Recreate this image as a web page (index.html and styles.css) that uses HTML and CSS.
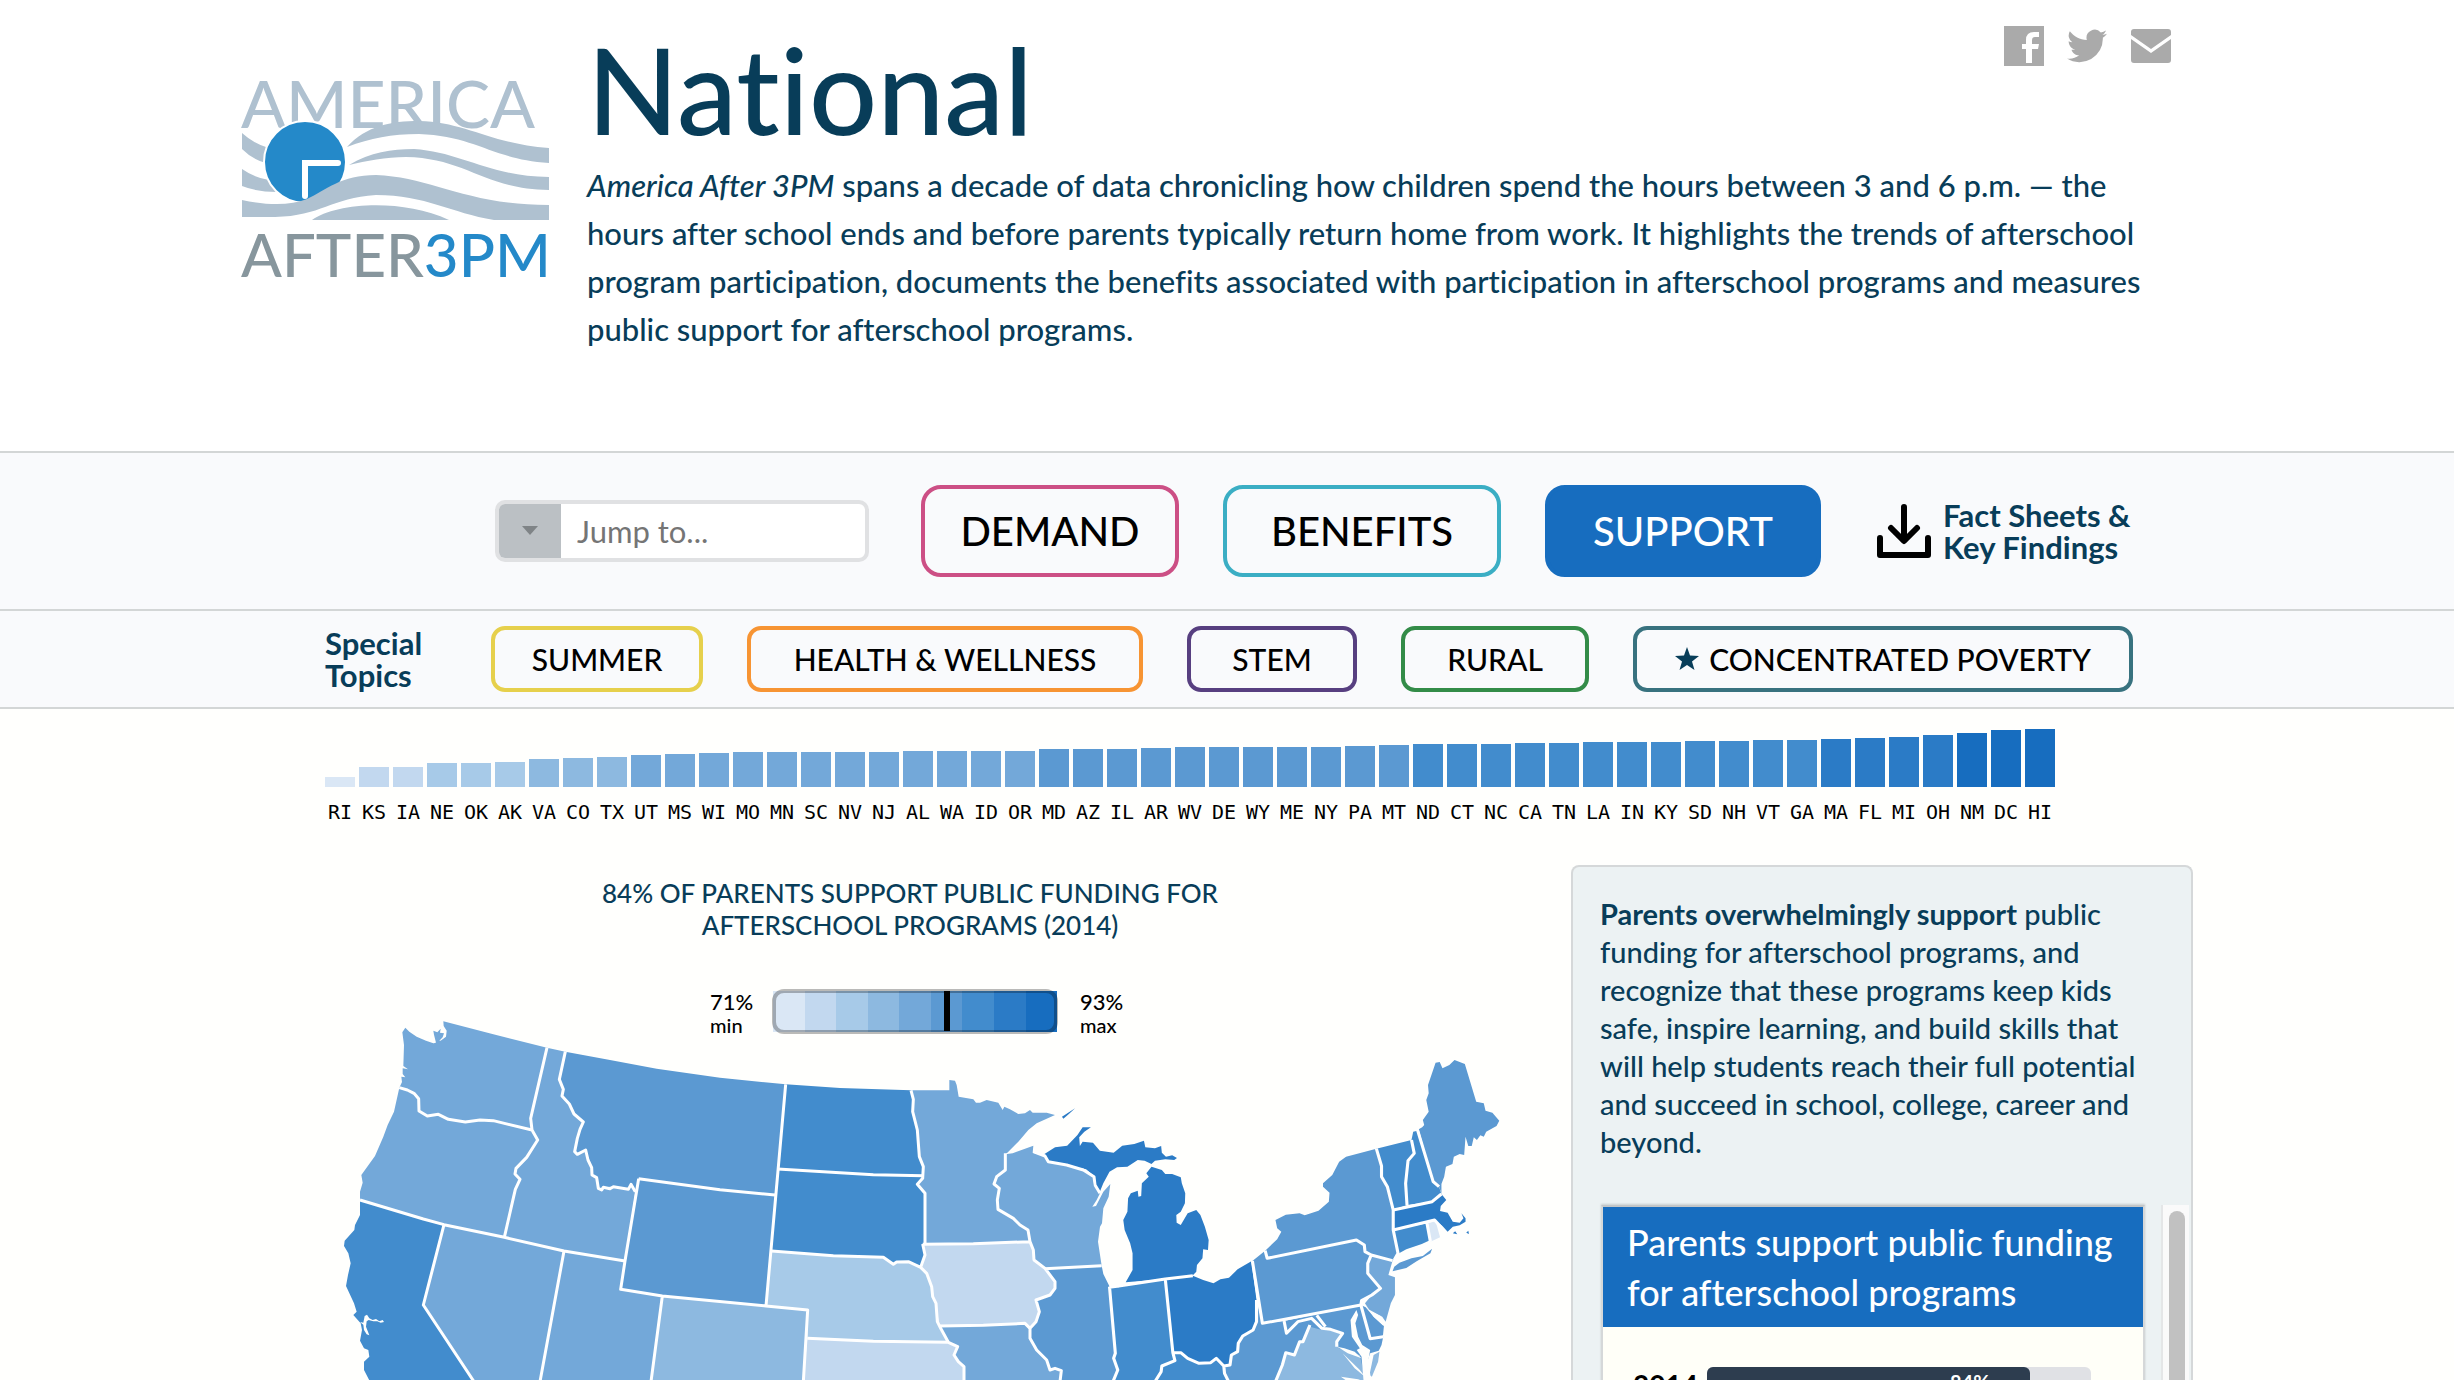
FILE: index.html
```html
<!DOCTYPE html>
<html lang="en">
<head>
<meta charset="utf-8">
<title>America After 3PM - National</title>
<link rel="stylesheet" href="styles.css">
</head>
<body>
<header class="header">
  <div class="header-inner">
    <a class="logo" href="#" aria-label="America After 3PM">
      <svg viewBox="0 0 310 230" width="310" height="230">
        <text class="logo-top" x="0" y="68">AMERICA</text>
        <g fill="#afc1d0">
          <path d="M1 73Q12 83 25 87V103Q12 100 1 89Z"/>
          <path d="M1 109Q14 118 28 120L36 132Q16 132 1 126Z"/>
          <path d="M106 87C125 66 150 61 178 61C225 62 250 84 308 88V103C250 99 235 76 178 74C150 74 130 78 106 87Z"/>
          <path d="M108 105C130 92 150 89 173 89C220 92 250 117 308 117V130C245 130 225 98 165 97C145 97 125 101 108 105Z"/>
        </g>
        <circle cx="64" cy="102" r="41" fill="#2489c9" stroke="#fff" stroke-width="2"/>
        <path d="M97 103H64V136" fill="none" stroke="#fff" stroke-width="6" stroke-linecap="round"/>
        <g fill="#afc1d0">
          <path d="M1 140C30 146 50 145 66 139C85 130 100 115 135 115C190 117 225 145 308 145V160H253C210 153 185 135 135 135C90 138 80 156 34 157H1Z"/>
          <path d="M71 160C95 143 160 138 208 160Z"/>
        </g>
        <text class="logo-bottom" x="0" y="217">AFTER<tspan class="logo-blue">3PM</tspan></text>
      </svg>
    </a>
    <div class="intro">
      <div class="title-row">
        <h1>National</h1>
        <nav class="social" aria-label="Share">
          <a href="#" aria-label="Facebook"><svg viewBox="0 0 40 40" width="40" height="40"><path fill="#aaa" d="M0 0H40V40H28V23H34L35 18H28V14Q28 11 31 11H35V6H30Q22 6 22 14V18H18V23H22V37H28V40H0Z"/></svg></a>
          <a href="#" aria-label="Twitter"><svg viewBox="0 0 24 24" width="40" height="40"><path fill="#aaa" d="M24 4.6c-.9.4-1.8.7-2.8.8 1-.6 1.800-1.600 2.200-2.700-1 .6-2 1-3.100 1.200a4.900 4.900 0 0 0-8.400 4.500C7.700 8.200 4.100 6.300 1.700 3.200a4.900 4.900 0 0 0 1.500 6.600c-.8 0-1.600-.2-2.200-.6v.1c0 2.400 1.700 4.400 3.900 4.800-.7.200-1.500.2-2.200.1.600 2 2.400 3.400 4.600 3.400A9.900 9.900 0 0 1 0 19.500a14 14 0 0 0 21.500-12.400c1-.7 1.800-1.600 2.500-2.500z"/></svg></a>
          <a href="#" aria-label="Email"><svg viewBox="0 0 42 40" width="42" height="40"><path fill="#aaa" d="M4 3H38Q41 3 41 6V9L21 23L1 9V6Q1 3 4 3ZM1 13L21 27L41 13V34Q41 37 38 37H4Q1 37 1 34Z"/></svg></a>
        </nav>
      </div>
      <p><em>America After 3PM</em> spans a decade of data chronicling how children spend the hours between 3 and 6 p.m. — the hours after school ends and before parents typically return home from work. It highlights the trends of afterschool program participation, documents the benefits associated with participation in afterschool programs and measures public support for afterschool programs.</p>
    </div>
  </div>
</header>

<nav class="bar bar-main" aria-label="Sections">
  <div class="bar-inner">
    <div class="jump">
      <button type="button" aria-label="Open list"><svg viewBox="0 0 16 10" width="16" height="10"><path fill="#7f8487" d="M0 0H16L8 9Z"/></svg></button>
      <input type="text" placeholder="Jump to..." aria-label="Jump to">
    </div>
    <button type="button" class="tab demand">DEMAND</button>
    <button type="button" class="tab benefits">BENEFITS</button>
    <button type="button" class="tab support">SUPPORT</button>
    <a class="facts" href="#">
      <svg viewBox="0 0 54 54" width="54" height="54"><path d="M27 3V34M14 24L27 37L40 24M3 34V51H51V34" fill="none" stroke="#000" stroke-width="6" stroke-linecap="round" stroke-linejoin="round"/></svg>
      <span>Fact Sheets &amp;<br>Key Findings</span>
    </a>
  </div>
</nav>
<nav class="bar bar-topics" aria-label="Special topics">
  <div class="bar-inner">
    <span class="topics-label">Special<br>Topics</span>
    <button type="button" class="topic summer">SUMMER</button>
    <button type="button" class="topic health">HEALTH &amp; WELLNESS</button>
    <button type="button" class="topic stem">STEM</button>
    <button type="button" class="topic rural">RURAL</button>
    <button type="button" class="topic poverty"><svg viewBox="0 0 24 24" width="24" height="24"><path fill="#083d59" d="M12 0L15 8.500L24 9L17 14.500L19.500 23L12 18L4.500 23L7 14.500L0 9L9 8.500Z"/></svg>CONCENTRATED POVERTY</button>
  </div>
</nav>

<main class="main">
  <div class="main-inner">
    <ul class="chart" id="chart"></ul>
    <div class="columns">
      <section class="map-col">
        <h2>84% OF PARENTS SUPPORT PUBLIC FUNDING FOR<br>AFTERSCHOOL PROGRAMS (2014)</h2>
        <div class="legend">
          <div class="legend-text"><b>71%</b><span>min</span></div>
          <div class="scale">
            <i class="c1"></i><i class="c2"></i><i class="c3"></i><i class="c4"></i><i class="c5"></i><i class="c6"></i><i class="c7"></i><i class="c8"></i><i class="c9"></i>
            <span class="marker"></span>
          </div>
          <div class="legend-text"><b>93%</b><span>max</span></div>
        </div>
        <svg class="map" viewBox="0 0 3600 1140" role="img" aria-label="Support by state">
          <path class="c5" d="M247 97L256 83L268 95L290 110L318 122L340 130L348 128L342 104L340 92L352 97L362 86L360 98L372 100L368 112L358 122L372 124L376 145L366 158L364 180L358 205L344 200L335 214L326 206L318 214L326 196L344 192L350 176L328 173L346 162L356 150L352 138L342 130L362 122L378 110L380 92L371 78L370 64L520 103L681 143L632 355L636 390L520 362L480 360L436 366L385 358L355 343L322 348L297 333L296 296L282 280L262 270L238 263L246 246L244 230L256 232L248 222L248 205L264 208L250 198L252 135Z"/>
          <path class="c5" d="M238 263L262 270L282 280L296 296L297 333L322 348L355 343L385 358L436 366L480 360L520 362L636 390L653 420L620 472L588 505L585 522L600 538L586 568L553 712L372 674L310 657L120 600L120 575L128 548L124 525L165 468L190 410L203 375L222 335L232 290Z"/>
          <path class="c5" d="M681 143L736 155L718 238L730 268L726 288L748 312L762 342L790 366L780 388L772 415L764 455L772 463L797 450L804 480L815 503L816 525L830 533L835 565L870 560L925 568L933 553L946 575L915 783L732 753L553 712L586 568L600 538L585 522L588 505L620 472L653 420L636 390L632 355Z"/>
          <path class="c6" d="M736 155L870 180L1010 206L1200 233L1397 253L1365 585L1200 569L956 536L946 575L933 553L925 568L870 560L835 565L830 533L816 525L815 503L804 480L797 450L772 463L764 455L772 415L780 388L790 366L762 342L748 312L726 288L730 268L718 238Z"/>
          <path class="c6" d="M956 536L1200 569L1365 585L1338 918L1140 902L1027 888L902 868Z"/>
          <path class="c7" d="M120 600L372 674L310 915L462 1145H150L132 1110V1085L148 1070L145 1050L132 1045L120 1022L126 990L122 970L100 945L110 935L102 910L78 858L84 825L92 790L85 760L72 738L74 722L103 690L105 675L120 645Z"/>
          <path class="c5" d="M372 674L732 753L660 1145H462L310 915Z"/>
          <path class="c5" d="M732 753L915 783L902 868L1027 888L993 1145H660Z"/>
          <path class="c4" d="M1027 888L1338 918L1463 930L1450 1145H993Z"/>
          <path class="c7" d="M1397 253L1560 264L1773 271L1780 298L1778 335L1792 390L1798 470L1810 500V527L1660 524L1373 507Z"/>
          <path class="c7" d="M1373 507L1660 524L1810 527L1806 540L1792 553L1815 580V730L1808 732L1815 765L1802 802L1765 785L1730 788L1720 793L1690 772L1540 767L1355 753Z"/>
          <path class="c3" d="M1355 753L1540 767L1690 772L1720 793L1730 788L1765 785L1802 802L1820 820L1835 860L1838 890L1848 910L1852 965L1862 985L1885 1027L1660 1024L1462 1015L1463 930L1338 918Z"/>
          <path class="c2" d="M1462 1015L1660 1024L1885 1027L1905 1035L1913 1045L1902 1065L1915 1085L1932 1100V1145H1450Z"/>
          <path class="c5" d="M1773 271H1888V240L1905 242L1910 255L1916 290L1960 298L1968 308L1980 308L2000 300L2035 308L2048 330L2053 320L2070 328L2095 342L2115 340L2130 330L2138 338L2180 338L2205 345L2150 370L2125 390L2095 425L2062 458L2056 463V510L2030 530L2022 552L2038 565L2032 600L2034 628L2080 655L2100 675L2124 690L2130 725L1960 731L1815 733V580L1792 553L1806 540L1810 500L1798 470L1792 390L1778 335L1780 298Z"/>
          <path class="c2" d="M1815 733L1960 731L2130 725L2140 750L2142 780L2175 805L2205 845V865L2190 885L2148 900L2158 935L2148 965L2130 985L2115 970L1990 976L1858 978L1848 910L1838 890L1835 860L1820 820L1802 802L1815 765L1808 732Z"/>
          <path class="c5" d="M1858 978L1990 976L2115 970L2130 990V1015L2150 1050L2180 1080L2190 1110L2205 1105L2224 1112L2220 1145H1932V1100L1915 1085L1902 1065L1913 1045L1885 1027L1862 985Z"/>
          <path class="c5" d="M2056 463L2078 460L2140 437L2138 458L2175 468L2185 485L2240 495L2290 510L2322 530L2325 555L2340 580L2330 600L2317 620L2328 618L2350 575L2371 552L2366 590L2350 625L2346 670L2340 680L2334 725L2345 797L2174 806L2142 780L2140 750L2130 725L2124 690L2080 655L2034 628L2032 600L2038 565L2022 552L2030 530L2056 510Z"/>
          <path class="c6" d="M2174 806L2345 797L2350 822L2369 860L2386 1060L2381 1080L2393 1110L2379 1145H2220L2224 1112L2205 1105L2190 1110L2180 1080L2150 1050L2130 1015V990L2148 965L2158 935L2148 900L2190 885L2205 865V845Z"/>
          <path class="water" d="M120 966L130 968L134 948L141 944L148 955L158 960L168 957L178 964L188 960L192 966L182 968L172 964L160 964L146 960L140 964L138 980L148 1006L140 1003L132 990L130 974Z"/>
          <g transform="matrix(1.033 0 0 1 2040 120)">
            <path class="c7" d="M318 740L345 742L365 733L480 717L502 938L508 962L470 978L468 995L450 1025H328L342 990L330 955L335 940Z"/>
            <path class="c8" d="M480 719L560 707L590 720L620 730L640 718L665 713L690 688L730 664L745 780V845L735 870L705 888L692 910L690 935L672 945L668 975L650 978L628 955L612 968L578 970L545 955L525 938L503 938Z"/>
            <path class="c7" d="M450 1025L468 995L470 978L508 962L503 938L525 938L545 955L578 970L612 968L628 955L650 978L652 1000L664 1025Z"/>
            <path class="c8" d="M365 727L385 690V640L378 610L362 570L358 540L370 515L372 475L380 460L400 452L402 470L410 468L412 430L432 410L425 400L440 380L470 390L480 402L500 402L525 412L528 430L538 460L537 490L525 515L512 525L513 548L525 555L545 520L570 510L582 525L595 560L606 600L604 630L590 628L588 655L572 675L570 695L560 706L480 717Z"/>
            <path class="c8" d="M128 343L160 322L195 317L225 285L240 262L264 262L245 275L230 292L232 318L240 305L270 308L290 332L330 338L355 317L390 312L418 302L422 322L450 325L468 318L470 338L482 350L500 346L514 354L506 360L480 358L450 362L440 372L420 362L400 360L370 380L340 382L318 395L300 430L290 455L270 435V405L250 388L200 378L140 365ZM180 230L218 205L200 222L184 236Z"/>
            <path class="c6" d="M733 663L770 632L776 655L1035 600L1058 615L1060 635L1078 645L1068 670V700L1105 745L1080 765L1050 782L1048 795L930 822L762 850Z"/>
            <path class="c6" d="M770 632L805 598L817 575L805 565L800 540L830 524L870 520L885 526L925 512L955 485L957 458L938 440V430L965 405L985 365L1005 350L1093 326L1108 378V410L1125 440L1142 510V570L1156 640L1140 662L1078 645L1060 635L1058 615L1035 600L776 655Z"/>
            <path class="c6" d="M1140 694L1145 680L1160 668L1195 655L1228 648L1255 626L1250 640L1210 664L1180 684Z"/>
            <path class="c7" d="M1093 326L1195 300L1203 340L1185 362L1178 430L1182 495L1142 510L1125 440L1108 410V378Z"/>
            <path class="c7" d="M1195 300L1200 275L1212 272L1258 425L1275 440L1282 462L1255 485L1182 495L1178 430L1185 362L1203 340Z"/>
            <path class="c6" d="M1216 268L1226 262L1232 255L1228 240L1245 215L1238 180L1245 160L1243 135L1265 68L1277 66L1285 85L1305 75L1320 60L1350 72L1383 185L1405 190L1410 212L1430 218L1450 242L1442 258L1412 275L1405 290L1395 286L1385 300L1376 292L1370 318L1360 318L1352 290L1348 345L1335 342L1318 350L1314 372L1295 380L1290 410L1282 432L1282 460L1275 440L1258 425Z"/>
            <path class="c8" d="M1142 510L1255 485L1282 462L1296 480L1280 498L1278 513L1300 518L1315 545L1335 548L1346 535L1340 520L1352 535V545L1335 556L1315 560L1300 575L1285 558L1262 540L1142 570ZM1315 580L1322 574L1328 583ZM1354 578L1360 572L1362 582Z"/>
            <path class="c7" d="M1142 570L1240 550L1250 600L1225 612L1180 628L1155 642Z"/>
            <path class="c1" d="M1240 550L1265 543L1278 592L1250 605Z"/>
            <path class="c5" d="M1078 645L1140 662L1128 705L1147 712V765L1135 790L1120 845L1110 830L1070 808L1060 790L1080 765L1105 745L1068 700V670Z"/>
            <path class="c6" d="M1048 795L1062 802L1085 830L1115 858L1112 888L1075 896Z"/>
            <path class="c6" d="M745 780L762 850L825 843L1048 795L1075 896L1113 890L1108 915L1100 932L1075 940L1055 1000L1000 960L895 865L880 905L870 905L855 945L830 938L820 975L800 1025H664L652 1000L650 978L668 975L672 945L690 935L692 910L705 888L735 870L745 845Z"/>
            <path class="c4" d="M800 1025L820 975L830 938L855 945L870 905L880 905L900 860L935 870L960 865L995 880L978 905L985 925L1010 935L1045 945L1062 1025Z"/>
            <path class="c4" d="M1085 945L1102 935L1098 965L1080 1010L1073 1005Z"/>
            <path class="water" d="M1035 810L1040 825L1032 850L1040 890L1052 915L1075 930L1070 960L1078 1025H1056L1050 950L1036 930L1045 925L1022 890L1018 840ZM980 920L1000 925L1030 935L1050 955L1010 940ZM995 940L1045 990L1060 1010L1030 985ZM990 1010L1040 1018L1060 1025H1010Z"/>
            <path class="water" d="M1060 790L1072 812L1105 828L1114 858L1085 830Z"/>
            <g class="lines">
              <path d="M318 740L335 940L330 955L342 990L328 1025M318 742L345 738L480 717L560 707M480 717L502 938L525 938L545 955L578 970L612 968L628 955L650 978L668 975L672 945L690 935L692 910L705 888L735 870L745 845V780M502 938L508 962L470 978L468 995L450 1025M650 978L652 1000L664 1025"/>
              <path d="M733 663L762 850L1048 795L1050 782L1080 765L1105 745L1068 700V670L1078 645L1060 635L1058 615L1035 600L776 655L770 632M1078 645L1140 662"/>
              <path d="M1093 326L1108 378V410L1125 440L1142 510V570L1156 640L1145 660M1195 300L1203 340L1185 362L1178 430L1182 495M1212 268L1258 425L1275 440M1142 510L1255 485L1282 462M1142 570L1262 540L1280 560M1240 550L1250 605M1145 665L1200 640L1250 612"/>
              <path d="M1048 795L1075 896L1113 890M825 843L832 880L865 845L905 835L935 865L960 868L995 880L978 905V920M920 826L945 860M800 1025L820 975L830 938L855 945L870 905L880 905L900 855"/>
            </g>
          </g>
          <g class="lines">
            <path d="M238 263L262 270L282 280L296 296L297 333L322 348L355 343L385 358L436 366L480 360L520 362L636 390M681 143L632 355L636 390L653 420L620 472L588 505L585 522L600 538L586 568L553 712M120 600L310 657L372 674L553 712L732 753L915 783"/>
            <path d="M736 155L718 238L730 268L726 288L748 312L762 342L790 366L780 388L772 415L764 455L772 463L797 450L804 480L815 503L816 525L830 533L835 565L845 570L850 562L870 566L880 560L925 568L933 553L946 575M372 674L310 915L462 1145M732 753L660 1145"/>
            <path d="M956 536L915 783L902 868L1027 888L1338 918L1463 930L1450 1145M956 536L1200 569L1365 585M1397 253L1338 918M1027 888L993 1145"/>
            <path d="M1773 271L1780 298L1778 335L1792 390L1798 470L1810 500L1808 535L1792 553L1815 580V730M1373 507L1660 524L1810 527M1355 753L1540 767L1690 772L1720 793L1730 786L1765 785L1802 802M1808 732L1815 765L1802 802L1820 820L1835 860L1838 890L1848 910L1852 965L1862 985L1885 1027L1913 1040L1902 1065L1915 1085L1932 1100V1145M1462 1015L1660 1024L1885 1027"/>
            <path d="M1808 733L1960 731L2130 725M2056 460V510L2030 530L2022 552L2038 565L2032 600L2034 628L2080 655L2100 675L2124 690L2130 725L2140 750L2142 780L2175 805L2205 845V865L2190 885L2148 900L2158 935L2148 965L2130 985M1858 978L1990 976L2115 970L2130 985V1015L2150 1050L2180 1080L2190 1110L2205 1105L2224 1112L2220 1145M2174 806L2345 797M2140 455L2175 468L2185 485L2240 495L2290 510L2322 530L2325 555L2340 580"/>
          </g>
        </svg>
      </section>
      <aside class="panel">
        <p><strong>Parents overwhelmingly support</strong> public funding for afterschool programs, and recognize that these programs keep kids safe, inspire learning, and build skills that will help students reach their full potential and succeed in school, college, career and beyond.</p>
        <div class="scroller">
          <article class="card">
            <h3>Parents support public funding for afterschool programs</h3>
            <div class="stat">
              <span class="year">2014</span>
              <div class="track"><div class="fill">84%</div></div>
            </div>
          </article>
          <div class="rail"><div class="thumb"></div></div>
        </div>
      </aside>
    </div>
  </div>
</main>
<script src="chart.js"></script>
</body>
</html>
```
FILE: chart.js
```js
// state code, bar height in px; groups share one shade of the scale
const groups = [
  [1, "RI 10"],
  [2, "KS 20,IA 20"],
  [3, "NE 24,OK 24,AK 25"],
  [4, "VA 28,CO 29,TX 30"],
  [5, "UT 32,MS 33,WI 34,MO 35,MN 35,SC 35,NV 35,NJ 35,AL 36,WA 36,ID 36,OR 36"],
  [6, "MD 38,AZ 38,IL 38,AR 39,WV 40,DE 40,WY 40,ME 40,NY 40,PA 41,MT 42"],
  [7, "ND 43,CT 43,NC 43,CA 44,TN 44,LA 45,IN 45,KY 45,SD 46,NH 46,VT 47,GA 47"],
  [8, "MA 48,FL 49,MI 50,OH 52"],
  [9, "NM 54,DC 57,HI 58"]
];
document.getElementById("chart").innerHTML = groups.map(([shade, list]) =>
  list.split(",").map(item => {
    const [code, height] = item.split(" ");
    return `<li><i class="c${shade}" style="height:${height}px"></i><span>${code}</span></li>`;
  }).join("")
).join("");
```
FILE: styles.css
```css
* { box-sizing: border-box; }
body {
  margin: 0;
  height: 100vh;
  overflow: hidden;
  display: flex;
  flex-direction: column;
  background: #fffffd;
  color: #083d59;
  font-family: Lato, "Trebuchet MS", sans-serif;
  font-weight: 500;
  font-variant-ligatures: none;
}
h1, h2, h3, p, ul { margin: 0; padding: 0; font-weight: 500; }
a { color: inherit; text-decoration: none; }
button, input { font-family: inherit; color: #000; }
svg { display: block; }

.c1 { background: #dae7f5; fill: #dae7f5; }
.c2 { background: #c2d8ef; fill: #c2d8ef; }
.c3 { background: #a7cae8; fill: #a7cae8; }
.c4 { background: #8db9e0; fill: #8db9e0; }
.c5 { background: #73a8d9; fill: #73a8d9; }
.c6 { background: #5b99d2; fill: #5b99d2; }
.c7 { background: #428ccd; fill: #428ccd; }
.c8 { background: #2b7bc6; fill: #2b7bc6; }
.c9 { background: #176dbf; fill: #176dbf; }

.header { background: #fff; padding-bottom: 98px; }
.header-inner {
  display: flex;
  gap: 36px;
  width: 100%;
  max-width: 1972px;
  margin: 0 auto;
}
.logo { flex: none; padding-top: 60px; }
.logo-top { font-size: 66px; fill: #afc1d0; }
.logo-bottom { font-size: 60px; fill: #87969d; }
.logo-blue { fill: #2489c9; }
.intro { flex: 1; padding-top: 26px; }
.title-row { display: flex; justify-content: space-between; margin-bottom: 12px; }
h1 { font-size: 120px; line-height: 120px; padding-top: 3px; }
.social { display: flex; align-items: flex-start; gap: 23px; padding-right: 41px; }
.intro p { font-size: 31px; line-height: 48px; max-width: 1560px; }

.bar { background: #f9fafc; border-top: 2px solid #d3d6d6; }
.bar-inner {
  display: flex;
  align-items: center;
  gap: 44px;
  max-width: 1812px;
  margin: 0 auto;
  padding-left: 4px;
}
.bar-main .bar-inner { height: 156px; justify-content: flex-end; }
.bar-topics { border-bottom: 2px solid #d3d6d6; }
.bar-topics .bar-inner { height: 96px; justify-content: space-between; }
.jump {
  display: flex;
  width: 374px;
  height: 62px;
  margin-right: 8px;
  border: 4px solid #e0e1e3;
  border-radius: 10px;
  overflow: hidden;
  background: #fff;
}
.jump button {
  width: 62px;
  padding: 0;
  border: 0;
  background: #bbc0c4;
  display: flex;
  align-items: center;
  justify-content: center;
}
.jump input { flex: 1; min-width: 0; border: 0; padding: 0 16px; font-size: 31px; background: none; }
.jump input::placeholder { color: #757575; opacity: 1; }
.tab {
  height: 92px;
  padding: 0;
  border: 4px solid;
  border-radius: 20px;
  background: none;
  font-size: 40px;
  font-weight: 500;
}
.demand { width: 258px; border-color: #cc4f85; }
.benefits { width: 278px; border-color: #3baec4; }
.support { width: 276px; border-color: #176dbf; background: #176dbf; color: #fff; }
.facts {
  display: flex;
  align-items: center;
  gap: 12px;
  width: 256px;
  margin-left: 12px;
  font-size: 31px;
  line-height: 32px;
  font-weight: 700;
  white-space: nowrap;
}
.topics-label { width: 122px; font-size: 31px; line-height: 32px; font-weight: 700; }
.topic {
  display: flex;
  align-items: center;
  justify-content: center;
  gap: 10px;
  height: 66px;
  padding: 0;
  border: 4px solid;
  border-radius: 14px;
  background: none;
  font-size: 30px;
  font-weight: 500;
}
.summer { width: 212px; border-color: #e6d04c; }
.health { width: 396px; border-color: #f79433; }
.stem { width: 170px; border-color: #573f80; }
.rural { width: 188px; border-color: #338c48; }
.poverty { width: 500px; border-color: #38727f; }

.main { flex: 1; min-height: 0; overflow: hidden; }
.main-inner { max-width: 1972px; margin: 0 auto; padding: 20px 20px 0 84px; }
.chart { display: flex; gap: 4px; list-style: none; height: 98px; }
.chart li { width: 30px; display: flex; flex-direction: column; align-items: center; }
.chart i { width: 100%; margin-top: auto; }
.chart span {
  margin-top: 10px;
  font: 20px/30px "DejaVu Sans Mono", monospace;
  color: #000;
}
.columns { display: grid; grid-template-columns: 1fr 622px; margin-top: 38px; }
h2 { padding: 12px 76px 0 0; text-align: center; font-size: 26px; line-height: 32px; }
.legend { display: flex; justify-content: center; gap: 22px; padding-right: 66px; margin-top: 48px; }
.legend-text { display: flex; flex-direction: column; width: 40px; color: #000; white-space: nowrap; }
.legend-text b { font-size: 22px; line-height: 26px; font-weight: 500; }
.legend-text span { font-size: 20px; line-height: 20px; }
.scale { position: relative; display: flex; width: 286px; height: 45px; padding: 2px 1px; }
.scale i { flex: 1; }
.scale::after {
  content: "";
  position: absolute;
  inset: 0;
  border: 4px solid rgba(0, 0, 0, .27);
  border-radius: 12px;
}
.marker { position: absolute; left: 60%; top: 2px; width: 6px; height: 40px; background: #000; }
.map { width: 1200px; height: 380px; margin: -35px 0 0 -5px; }
.water { fill: #fffffd; }
.lines { fill: none; stroke: #fff; stroke-width: 9; stroke-linejoin: round; }

.panel {
  border: 2px solid #d5d8d9;
  border-bottom: 0;
  border-radius: 8px 8px 0 0;
  background: #ecf2f3;
  padding: 28px 2px 0 27px;
  height: 600px;
}
.panel p { font-size: 29px; line-height: 38px; width: 552px; }
.scroller { display: flex; gap: 16px; margin-top: 44px; padding-left: 1px; height: 300px; }
.card {
  width: 544px;
  border: 2px solid #d5d8d9;
  border-top-color: #c2c6c8;
  background: #fffff8;
  box-shadow: 0 -1px 2px rgba(0, 0, 0, .15);
}
h3 { background: #176dbf; color: #fff; padding: 10px 8px 10px 24px; font-size: 36px; line-height: 50px; }
.stat { display: flex; gap: 14px; padding: 40px 52px 0 30px; }
.year { width: 60px; font-size: 28px; line-height: 36px; font-weight: 700; color: #000; }
.track { flex: 1; height: 36px; border-radius: 6px; background: #e0e1e5; }
.fill {
  width: 84%;
  height: 100%;
  padding-right: 40px;
  border-radius: 6px;
  background: #2d3d4f;
  color: #fff;
  text-align: right;
  font-size: 20px;
  line-height: 30px;
  font-weight: 700;
}
.rail { width: 28px; padding: 6px; background: #fafafa; border-left: 2px solid #e4e6e7; }
.thumb { width: 16px; height: 280px; border-radius: 8px; background: #c1c1c1; }
```
